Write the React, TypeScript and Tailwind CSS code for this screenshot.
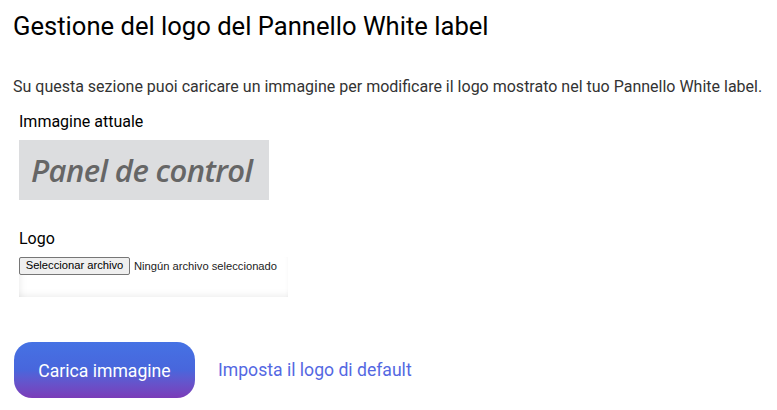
export default function App() {
  return (
    <div className="min-h-screen bg-white font-['Roboto',sans-serif] px-[13px] pt-[11px]">
      <h1 className="text-[25.6px] leading-[30px] text-black font-normal">
        Gestione del logo del Pannello White label
      </h1>

      <p className="mt-[35px] text-[16px] leading-[22px] text-[#333] whitespace-nowrap">
        Su questa sezione puoi caricare un immagine per modificare il logo mostrato nel tuo Pannello White label.
      </p>

      <div className="pl-[6px]">
        <div className="mt-[12px] text-[16px] leading-[24px] text-black">Immagine attuale</div>
        <div className="mt-[6px] w-[250px] h-[60px] bg-[#dcdddf] flex items-center pl-[12px]">
          <span className="font-['Open_Sans',sans-serif] italic font-semibold text-[31px] leading-none text-[#666] tracking-[-0.6px]">
            Panel de control
          </span>
        </div>

        <div className="mt-[27px] text-[16px] leading-[24px] text-black">Logo</div>
        <div className="mt-[6px] w-[269px] h-[40px] bg-white shadow-[inset_8px_0_8px_-8px_rgba(0,0,0,0.1),inset_0_-8px_8px_-8px_rgba(0,0,0,0.1),inset_-4px_0_6px_-6px_rgba(0,0,0,0.08)]">
          <div className="flex items-center whitespace-nowrap font-['Liberation_Sans',Arial,sans-serif] text-[11.2px]">
            <button className="h-[18px] w-[111px] bg-[#efefef] border border-[#767676] rounded-[2px] text-black leading-none whitespace-nowrap">
              Seleccionar archivo
            </button>
            <span className="ml-[4px] text-[#222] whitespace-nowrap">Ningún archivo seleccionado</span>
          </div>
        </div>
      </div>

      <div className="mt-[45px] flex items-center">
        <button className="ml-px h-[56px] w-[181px] pt-[2px] rounded-[18px] bg-gradient-to-b from-[#4572e4] via-[#4866dc] to-[#7a3bb8] text-white text-[17.6px]">
          Carica immagine
        </button>
        <a href="#" className="ml-[23px] text-[17.6px] text-[#5468e2]">
          Imposta il logo di default
        </a>
      </div>
    </div>
  );
}
